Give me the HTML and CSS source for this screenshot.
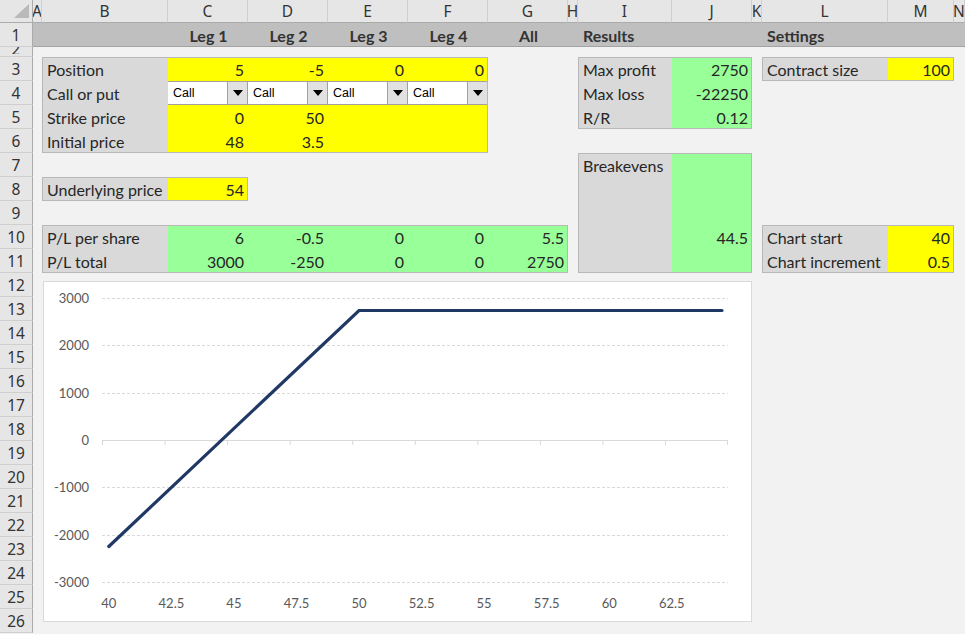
FILE: index.html
```html
<!DOCTYPE html>
<html lang="en">
<head>
    <meta charset="UTF-8">
    <title>Options P/L</title>
    <link rel="stylesheet" href="styles.css">
</head>
<body>
<div class="sheet">
    <!-- column headers -->
    <div class="corner r0 c0"><span class="corner-mark"></span></div>
    <div class="ch r0 cA">A</div>
    <div class="ch r0 cB">B</div>
    <div class="ch r0 cC">C</div>
    <div class="ch r0 cD">D</div>
    <div class="ch r0 cE">E</div>
    <div class="ch r0 cF">F</div>
    <div class="ch r0 cG">G</div>
    <div class="ch r0 cH">H</div>
    <div class="ch r0 cI">I</div>
    <div class="ch r0 cJ">J</div>
    <div class="ch r0 cK">K</div>
    <div class="ch r0 cL">L</div>
    <div class="ch r0 cM">M</div>
    <div class="ch r0 cN">N</div>

    <!-- row headers -->
    <div class="rh c0 r1">1</div>
    <div class="rh c0 r2 squashed"><span>2</span></div>
    <div class="rh c0 r3">3</div>
    <div class="rh c0 r4">4</div>
    <div class="rh c0 r5">5</div>
    <div class="rh c0 r6">6</div>
    <div class="rh c0 r7">7</div>
    <div class="rh c0 r8">8</div>
    <div class="rh c0 r9">9</div>
    <div class="rh c0 r10">10</div>
    <div class="rh c0 r11">11</div>
    <div class="rh c0 r12">12</div>
    <div class="rh c0 r13">13</div>
    <div class="rh c0 r14">14</div>
    <div class="rh c0 r15">15</div>
    <div class="rh c0 r16">16</div>
    <div class="rh c0 r17">17</div>
    <div class="rh c0 r18">18</div>
    <div class="rh c0 r19">19</div>
    <div class="rh c0 r20">20</div>
    <div class="rh c0 r21">21</div>
    <div class="rh c0 r22">22</div>
    <div class="rh c0 r23">23</div>
    <div class="rh c0 r24">24</div>
    <div class="rh c0 r25">25</div>
    <div class="rh c0 r26">26</div>

    <!-- title band -->
    <div class="band r1"></div>
    <div class="cell head center r1 cC">Leg 1</div>
    <div class="cell head center r1 cD">Leg 2</div>
    <div class="cell head center r1 cE">Leg 3</div>
    <div class="cell head center r1 cF">Leg 4</div>
    <div class="cell head center r1 cG">All</div>
    <div class="cell head r1 cI">Results</div>
    <div class="cell head r1 cL">Settings</div>

    <!-- legs -->
    <div class="cell lbl r3 cB">Position</div>
    <div class="cell yel num r3 cC">5</div>
    <div class="cell yel num r3 cD">-5</div>
    <div class="cell yel num r3 cE">0</div>
    <div class="cell yel num r3 cF">0</div>

    <div class="cell lbl r4 cB">Call or put</div>
    <div class="combo r4 cC"><span class="combo-text">Call</span><span class="combo-btn"><svg width="10" height="6" viewBox="0 0 10 6"><polygon points="0,0 10,0 5,6" fill="#000"/></svg></span></div>
    <div class="combo r4 cD"><span class="combo-text">Call</span><span class="combo-btn"><svg width="10" height="6" viewBox="0 0 10 6"><polygon points="0,0 10,0 5,6" fill="#000"/></svg></span></div>
    <div class="combo r4 cE"><span class="combo-text">Call</span><span class="combo-btn"><svg width="10" height="6" viewBox="0 0 10 6"><polygon points="0,0 10,0 5,6" fill="#000"/></svg></span></div>
    <div class="combo r4 cF"><span class="combo-text">Call</span><span class="combo-btn"><svg width="10" height="6" viewBox="0 0 10 6"><polygon points="0,0 10,0 5,6" fill="#000"/></svg></span></div>

    <div class="cell lbl r5 cB">Strike price</div>
    <div class="cell yel num r5 cC">0</div>
    <div class="cell yel num r5 cD">50</div>
    <div class="cell yel num r5 cE"></div>
    <div class="cell yel num r5 cF"></div>

    <div class="cell lbl r6 cB">Initial price</div>
    <div class="cell yel num r6 cC">48</div>
    <div class="cell yel num r6 cD">3.5</div>
    <div class="cell yel num r6 cE"></div>
    <div class="cell yel num r6 cF"></div>

    <div class="frame f-legs"></div>

    <!-- underlying -->
    <div class="cell lbl r8 cB">Underlying price</div>
    <div class="cell yel num r8 cC">54</div>
    <div class="frame f-under"></div>

    <!-- P/L -->
    <div class="cell lbl r10 cB">P/L per share</div>
    <div class="cell grn num r10 cC">6</div>
    <div class="cell grn num r10 cD">-0.5</div>
    <div class="cell grn num r10 cE">0</div>
    <div class="cell grn num r10 cF">0</div>
    <div class="cell grn num r10 cG">5.5</div>
    <div class="cell lbl r11 cB">P/L total</div>
    <div class="cell grn num r11 cC">3000</div>
    <div class="cell grn num r11 cD">-250</div>
    <div class="cell grn num r11 cE">0</div>
    <div class="cell grn num r11 cF">0</div>
    <div class="cell grn num r11 cG">2750</div>
    <div class="frame f-pl"></div>

    <!-- results -->
    <div class="cell lbl r3 cI">Max profit</div>
    <div class="cell grn num r3 cJ">2750</div>
    <div class="cell lbl r4 cI">Max loss</div>
    <div class="cell grn num r4 cJ">-22250</div>
    <div class="cell lbl r5 cI">R/R</div>
    <div class="cell grn num r5 cJ">0.12</div>
    <div class="frame f-results"></div>

    <div class="cell lbl be-label">Breakevens</div>
    <div class="cell grn be-blank"></div>
    <div class="cell grn num r10 cJ">44.5</div>
    <div class="cell grn r11 cJ"></div>
    <div class="frame f-breakeven"></div>

    <!-- settings -->
    <div class="cell lbl r3 cL">Contract size</div>
    <div class="cell yel num r3 cM">100</div>
    <div class="frame f-contract"></div>

    <div class="cell lbl r10 cL">Chart start</div>
    <div class="cell yel num r10 cM">40</div>
    <div class="cell lbl r11 cL">Chart increment</div>
    <div class="cell yel num r11 cM">0.5</div>
    <div class="frame f-chartset"></div>

    <!-- P/L chart -->
    <div class="chart">
        <svg width="707" height="338" viewBox="0 0 707 338">
            <g stroke="#d9d9d9" stroke-width="1" stroke-dasharray="3 2">
                <line x1="58" y1="16.5" x2="684" y2="16.5"/>
                <line x1="58" y1="63.5" x2="684" y2="63.5"/>
                <line x1="58" y1="111.5" x2="684" y2="111.5"/>
                <line x1="58" y1="205.5" x2="684" y2="205.5"/>
                <line x1="58" y1="253.5" x2="684" y2="253.5"/>
                <line x1="58" y1="300.5" x2="684" y2="300.5"/>
            </g>
            <!-- category axis with tick marks every 5 points -->
            <g stroke="#d9d9d9" stroke-width="1">
                <line x1="58" y1="158.5" x2="684" y2="158.5"/>
                <line x1="58.5" y1="158" x2="58.5" y2="163"/>
                <line x1="121.1" y1="158" x2="121.1" y2="163"/>
                <line x1="183.6" y1="158" x2="183.6" y2="163"/>
                <line x1="246.2" y1="158" x2="246.2" y2="163"/>
                <line x1="308.7" y1="158" x2="308.7" y2="163"/>
                <line x1="371.3" y1="158" x2="371.3" y2="163"/>
                <line x1="433.8" y1="158" x2="433.8" y2="163"/>
                <line x1="496.4" y1="158" x2="496.4" y2="163"/>
                <line x1="558.9" y1="158" x2="558.9" y2="163"/>
                <line x1="621.5" y1="158" x2="621.5" y2="163"/>
                <line x1="683.5" y1="158" x2="683.5" y2="163"/>
            </g>
            <g class="axis-label" text-anchor="end">
                <text x="45" y="21">3000</text>
                <text x="45" y="68">2000</text>
                <text x="45" y="116">1000</text>
                <text x="45" y="163">0</text>
                <text x="45" y="210">-1000</text>
                <text x="45" y="258">-2000</text>
                <text x="45" y="305">-3000</text>
            </g>
            <g class="axis-label" text-anchor="middle">
                <text x="64.8" y="326">40</text>
                <text x="127.4" y="326">42.5</text>
                <text x="189.9" y="326">45</text>
                <text x="252.5" y="326">47.5</text>
                <text x="315" y="326">50</text>
                <text x="377.6" y="326">52.5</text>
                <text x="440.1" y="326">55</text>
                <text x="502.7" y="326">57.5</text>
                <text x="565.2" y="326">60</text>
                <text x="627.8" y="326">62.5</text>
            </g>
            <polyline points="64.8,264.5 315,28.5 678,28.5" fill="none" stroke="#203864" stroke-width="3.2" stroke-linejoin="miter" stroke-linecap="round"/>
        </svg>
    </div>
</div>
</body>
</html>
```

FILE: styles.css
```css
* {
    box-sizing: border-box;
    margin: 0;
    padding: 0;
}

html, body {
    background: #f2f2f2;
    overflow: hidden;
}

body {
    font-family: Lato, "Noto Sans", sans-serif;
    font-size: 16px;
    color: #262626;
}

/* Sheet grid: row header, columns A..N / column header, rows 1..26 */
.sheet {
    display: grid;
    grid-template-columns: 33px 9px 126px 80px 80px 80px 80px 80px 10px 94px 80px 10px 126px 66px 1fr;
    grid-template-rows: 23px 24px 10px repeat(24, 24px);
    width: 965px;
    height: 634px;
}

.r0 { grid-row: 1; }
.r1 { grid-row: 2; }
.r2 { grid-row: 3; }
.r3 { grid-row: 4; }
.r4 { grid-row: 5; }
.r5 { grid-row: 6; }
.r6 { grid-row: 7; }
.r7 { grid-row: 8; }
.r8 { grid-row: 9; }
.r9 { grid-row: 10; }
.r10 { grid-row: 11; }
.r11 { grid-row: 12; }
.r12 { grid-row: 13; }
.r13 { grid-row: 14; }
.r14 { grid-row: 15; }
.r15 { grid-row: 16; }
.r16 { grid-row: 17; }
.r17 { grid-row: 18; }
.r18 { grid-row: 19; }
.r19 { grid-row: 20; }
.r20 { grid-row: 21; }
.r21 { grid-row: 22; }
.r22 { grid-row: 23; }
.r23 { grid-row: 24; }
.r24 { grid-row: 25; }
.r25 { grid-row: 26; }
.r26 { grid-row: 27; }

.c0 { grid-column: 1; }
.cA { grid-column: 2; }
.cB { grid-column: 3; }
.cC { grid-column: 4; }
.cD { grid-column: 5; }
.cE { grid-column: 6; }
.cF { grid-column: 7; }
.cG { grid-column: 8; }
.cH { grid-column: 9; }
.cI { grid-column: 10; }
.cJ { grid-column: 11; }
.cK { grid-column: 12; }
.cL { grid-column: 13; }
.cM { grid-column: 14; }
.cN { grid-column: 15; }

/* Headers */
.corner {
    background: #e6e6e6;
    border-right: 1px solid #ababab;
    border-bottom: 1px solid #ababab;
    display: flex;
    justify-content: flex-end;
    align-items: flex-end;
    padding: 0 3px 4px 0;
}

.corner-mark {
    width: 15px;
    height: 14px;
    background: #b9b9b9;
    clip-path: polygon(100% 0, 100% 100%, 0 100%);
}

.ch, .rh {
    background: #e6e6e6;
    font-family: "Noto Sans", sans-serif;
    font-size: 15.5px;
    color: #333;
    display: flex;
    justify-content: center;
    align-items: center;
    overflow: hidden;
    white-space: nowrap;
}

.ch {
    border-right: 1px solid #cfcfcf;
    border-bottom: 1px solid #ababab;
}

.rh {
    border-right: 1px solid #ababab;
    border-bottom: 1px solid #cfcfcf;
    padding-top: 1px;
}

/* row 2 is squashed to a sliver; only the foot of its number shows */
.rh.squashed {
    align-items: flex-start;
    padding: 0;
}

.rh.squashed span {
    line-height: 10px;
    height: 10px;
    margin-top: -3px;
    clip-path: inset(3px 0 0 0);
}

.band {
    grid-column: 2 / -1;
    background: #bfbfbf;
    border-bottom: 1px solid #a3a3a3;
}

/* Cells */
.cell {
    line-height: 22px;
    padding: 2px 4px 0 5px;
    white-space: nowrap;
    overflow: hidden;
}

.head {
    font-weight: bold;
    color: #333;
}

.center { text-align: center; }
.num { text-align: right; }

.lbl { background: #d9d9d9; }
.yel { background: #ffff00; }
.grn { background: #99ff99; }

.be-label {
    grid-column: 10;
    grid-row: 8 / 13;
}

.be-blank {
    grid-column: 11;
    grid-row: 8 / 11;
}

/* Call/put drop-downs */
.combo {
    display: flex;
    background: #fff;
    border-top: 1px solid #a0a0a0;
    border-bottom: 1px solid #a0a0a0;
    font-family: "Liberation Sans", Arial, sans-serif;
    font-size: 12.5px;
    color: #000;
}

.combo-text {
    flex: 1;
    padding-left: 5px;
    line-height: 23px;
}

.combo-btn {
    width: 21px;
    background: #e1e1e1;
    border-left: 1px solid #a0a0a0;
    border-right: 1px solid #a0a0a0;
    display: flex;
    justify-content: center;
    align-items: center;
}

/* Block outlines drawn over the cells */
.frame {
    border: 1px solid #b8b8b8;
}

.f-legs { grid-column: 3 / 8; grid-row: 4 / 8; }
.f-under { grid-column: 3 / 5; grid-row: 9 / 10; }
.f-pl { grid-column: 3 / 9; grid-row: 11 / 13; }
.f-results { grid-column: 10 / 12; grid-row: 4 / 7; }
.f-breakeven { grid-column: 10 / 12; grid-row: 8 / 13; }
.f-contract { grid-column: 13 / 15; grid-row: 4 / 5; }
.f-chartset { grid-column: 13 / 15; grid-row: 11 / 13; }

/* Chart object */
.chart {
    grid-column: 3 / 12;
    grid-row: 13 / 28;
    margin: 8px 0 11px 1px;
    background: #fff;
    border: 1px solid #d9d9d9;
}

.chart svg {
    display: block;
}

.axis-label {
    font-family: Lato, sans-serif;
    font-size: 13px;
    fill: #595959;
}
```
